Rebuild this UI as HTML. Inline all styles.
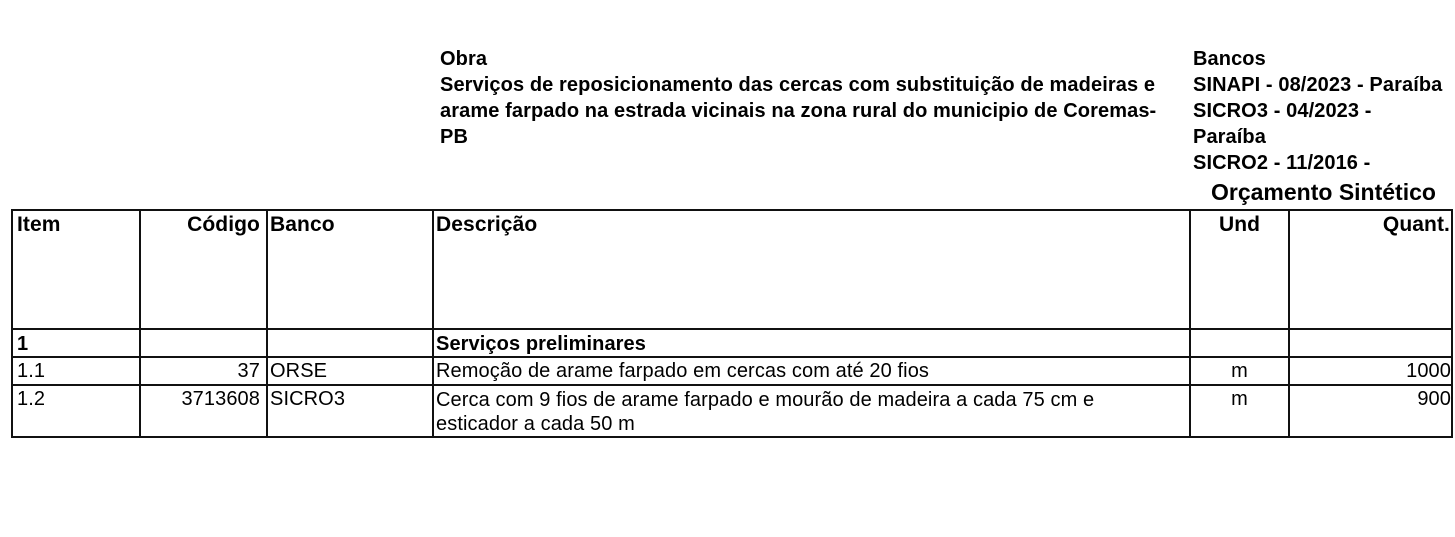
<!DOCTYPE html>
<html><head><meta charset="utf-8"><style>
body{margin:0;width:1455px;height:537px;background:#fff;font-family:"Liberation Sans",Arial,sans-serif;color:#000;position:relative;overflow:hidden}
.a{position:absolute;white-space:nowrap}
.b{font-weight:bold;font-size:20px;line-height:26px;letter-spacing:0.1px}
.h{position:absolute;background:#111}
.t{position:absolute;font-size:20px;white-space:nowrap;line-height:22px;letter-spacing:0.1px}
.k{font-weight:bold;font-size:21px}
</style></head><body>
<div class="a b" style="left:440px;top:46px">Obra<br>Serviços de reposicionamento das cercas com substituição de madeiras e<br>arame farpado na estrada vicinais na zona rural do municipio de Coremas-<br>PB</div>
<div class="a b" style="left:1193px;top:46px">Bancos<br>SINAPI - 08/2023 - Paraíba<br>SICRO3 - 04/2023 -<br>Paraíba<br>SICRO2 - 11/2016 -</div>
<div class="a" style="left:1211px;top:178px;font-weight:bold;font-size:23px;line-height:28px">Orçamento Sintético</div>
<div class="h" style="left:11px;top:209px;width:1442px;height:2px"></div>
<div class="h" style="left:11px;top:328px;width:1442px;height:2px"></div>
<div class="h" style="left:11px;top:356px;width:1442px;height:2px"></div>
<div class="h" style="left:11px;top:384px;width:1442px;height:2px"></div>
<div class="h" style="left:11px;top:436px;width:1442px;height:2px"></div>
<div class="h" style="left:11px;top:209px;width:2px;height:229px"></div>
<div class="h" style="left:139px;top:209px;width:2px;height:229px"></div>
<div class="h" style="left:266px;top:209px;width:2px;height:229px"></div>
<div class="h" style="left:432px;top:209px;width:2px;height:229px"></div>
<div class="h" style="left:1189px;top:209px;width:2px;height:229px"></div>
<div class="h" style="left:1288px;top:209px;width:2px;height:229px"></div>
<div class="h" style="left:1451px;top:209px;width:2px;height:229px"></div>
<div class="t k" style="left:17px;top:214px">Item</div>
<div class="t k" style="right:1195px;top:214px">Código</div>
<div class="t k" style="left:270px;top:214px">Banco</div>
<div class="t k" style="left:436px;top:214px">Descrição</div>
<div class="t k" style="left:1191px;width:97px;text-align:center;top:214px">Und</div>
<div class="t k" style="right:5px;top:214px">Quant.</div>
<div class="t k" style="left:17px;top:333px;font-size:20px">1</div>
<div class="t k" style="left:436px;top:333px;font-size:20px">Serviços preliminares</div>
<div class="t" style="left:17px;top:360px">1.1</div>
<div class="t" style="right:1195px;top:360px">37</div>
<div class="t" style="left:270px;top:360px">ORSE</div>
<div class="t" style="left:436px;top:360px">Remoção de arame farpado em cercas com até 20 fios</div>
<div class="t" style="left:1191px;width:97px;text-align:center;top:360px">m</div>
<div class="t" style="right:4px;top:360px">1000</div>
<div class="t" style="left:17px;top:388px">1.2</div>
<div class="t" style="right:1195px;top:388px">3713608</div>
<div class="t" style="left:270px;top:388px">SICRO3</div>
<div class="t" style="left:436px;top:388px;line-height:24px">Cerca com 9 fios de arame farpado e mourão de madeira a cada 75 cm e<br>esticador a cada 50 m</div>
<div class="t" style="left:1191px;width:97px;text-align:center;top:388px">m</div>
<div class="t" style="right:4px;top:388px">900</div>
</body></html>
